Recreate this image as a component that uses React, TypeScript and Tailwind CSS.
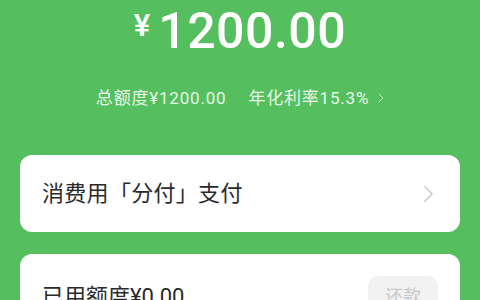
const font = { fontFamily: "Roboto, 'Noto Sans CJK SC', sans-serif" };

const Chevron = ({ className }: { className?: string }) => (
  <svg className={className} viewBox="0 0 12 20" fill="none">
    <polyline
      points="2,2 10,10 2,18"
      stroke="currentColor"
      strokeWidth="1.8"
      strokeLinecap="round"
      strokeLinejoin="round"
    />
  </svg>
);

export default function App() {
  return (
    <div
      className="w-[480px] h-[300px] overflow-hidden bg-[#55bf5f] flex flex-col"
      style={font}
    >
      {/* balance */}
      <div className="shrink-0 pt-[6px] flex justify-center items-start text-white">
        <span className="text-[31px] leading-none font-medium mt-[4px] mr-[8px]">¥</span>
        <span className="text-[50px] leading-none font-medium tracking-[0.5px]">1200.00</span>
      </div>

      <div className="shrink-0 mt-[32px] flex justify-center items-center text-[17px] leading-[20px] tracking-[0.8px] text-white/85">
        <span>总额度¥1200.00</span>
        <span className="ml-[22px]">年化利率15.3%</span>
        <Chevron className="ml-[9px] w-[6px] h-[10px] text-white/70" />
      </div>

      {/* pay entry */}
      <div className="shrink-0 mt-[47px] mx-[20px] h-[77px] bg-white rounded-[12px] flex items-center justify-between pl-[22px] pr-[26px]">
        <span className="text-[22px] text-[#2a2a2a] tracking-[0.3px]">消费用「分付」支付</span>
        <Chevron className="w-[11px] h-[18px] text-[#c9c9c9]" />
      </div>

      {/* used quota */}
      <div className="shrink-0 mt-[22px] mx-[20px] h-[80px] bg-white rounded-[12px] flex items-start justify-between pl-[22px] pr-[22px] pt-[22px]">
        <span className="mt-[6px] text-[22px] leading-[30px] text-[#2a2a2a]">已用额度¥0.00</span>
        <span className="w-[70px] h-[40px] rounded-[10px] bg-[#f2f2f2] text-[#c8c8c8] text-[18px] flex items-center justify-center">
          还款
        </span>
      </div>
    </div>
  );
}
